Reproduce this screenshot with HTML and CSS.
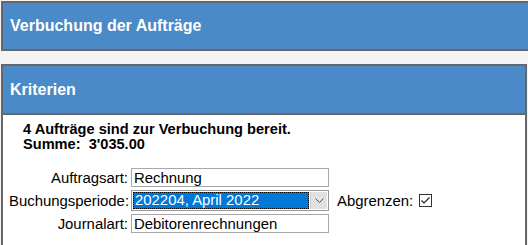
FILE: index.html
```html
<!DOCTYPE html>
<html lang="de">
<head>
    <meta charset="UTF-8">
    <title>Verbuchung der Aufträge</title>
    <link rel="stylesheet" href="styles.css">
</head>
<body>
    <div class="panel panel-top">
        <h1>Verbuchung der Aufträge</h1>
    </div>

    <div class="panel panel-main">
        <h2>Kriterien</h2>
        <div class="panel-body">
            <p class="summary">4 Aufträge sind zur Verbuchung bereit.<br>Summe:&nbsp; 3'035.00</p>

            <!-- Criteria form -->
            <div class="form-grid">
                <label for="auftragsart">Auftragsart:</label>
                <input id="auftragsart" class="field" type="text" value="Rechnung">
                <span></span>

                <label>Buchungsperiode:</label>
                <div class="field select">
                    <span class="selected">202204, April 2022</span>
                    <span class="arrow">
                        <svg width="9" height="6" viewBox="0 0 9 6"><path d="M0.5 0.5 L4.5 4.5 L8.5 0.5" fill="none" stroke="#555" stroke-width="1"/></svg>
                    </span>
                </div>
                <div class="check">
                    <span>Abgrenzen:</span>
                    <span class="box">
                        <svg width="11" height="11" viewBox="0 0 11 11"><path d="M1.5 5.5 L4 8 L9.5 2.5" fill="none" stroke="#222" stroke-width="1.2"/></svg>
                    </span>
                </div>

                <label for="journalart">Journalart:</label>
                <input id="journalart" class="field" type="text" value="Debitorenrechnungen">
                <span></span>
            </div>
        </div>
    </div>
</body>
</html>
```

FILE: styles.css
```css
body {
    margin: 0;
    padding: 1px 0 0 1px;
    background: #f4f4f4;
    font-family: 'Liberation Sans', Arial, sans-serif;
    color: #000;
    overflow: hidden;
}

.panel {
    border: 2px solid #676767;
}

.panel-top {
    background: #4a8ac8;
    height: 46px;
    display: flex;
    align-items: center;
    border-right: none;
    margin-right: -4px;
}

.panel-top h1,
.panel-main h2 {
    margin: 0;
    padding-left: 7px;
    font-size: 16px;
    font-weight: bold;
    color: #fff;
}

.panel-main {
    margin-top: 13px;
    margin-right: 1px;
    background: #fff;
}

.panel-main h2 {
    background: #4a8ac8;
    height: 47px;
    line-height: 47px;
    border-bottom: 2px solid #676767;
}

.panel-body {
    height: 126px;
    padding: 7px 0 0 6px;
}

.summary {
    margin: 0 0 16px 14px;
    font-size: 14.6px;
    font-weight: bold;
    line-height: 15px;
}

.form-grid {
    display: grid;
    grid-template-columns: 120px 198px auto;
    column-gap: 2px;
    row-gap: 3px;
    align-items: center;
    font-size: 14.9px;
}

.form-grid label {
    text-align: right;
    white-space: nowrap;
    padding-right: 1px;
}

.field {
    box-sizing: border-box;
    width: 198px;
    height: 19px;
    margin: 0;
    padding: 0 2px;
    border: 1px solid #a8a8a8;
    font-family: 'Liberation Sans', Arial, sans-serif;
    font-size: 14.9px;
    color: #000;
    background: #fff;
    outline: none;
}

.select {
    height: 21px;
    display: flex;
    align-items: stretch;
    padding: 1px;
    border-color: #999;
}

.selected {
    flex: 1;
    background: #0078d7;
    color: #fff;
    border: 1px dotted #000;
    padding-left: 1px;
    line-height: 15px;
}

.arrow {
    width: 16px;
    margin-left: 1px;
    background: #e1e1e1;
    border-left: 1px solid #ccc;
    display: flex;
    align-items: center;
    justify-content: center;
}

.check {
    display: flex;
    align-items: center;
    gap: 6px;
    padding-left: 6px;
}

.box {
    width: 11px;
    height: 11px;
    border: 1px solid #333;
    background: #fff;
    display: flex;
}
```
